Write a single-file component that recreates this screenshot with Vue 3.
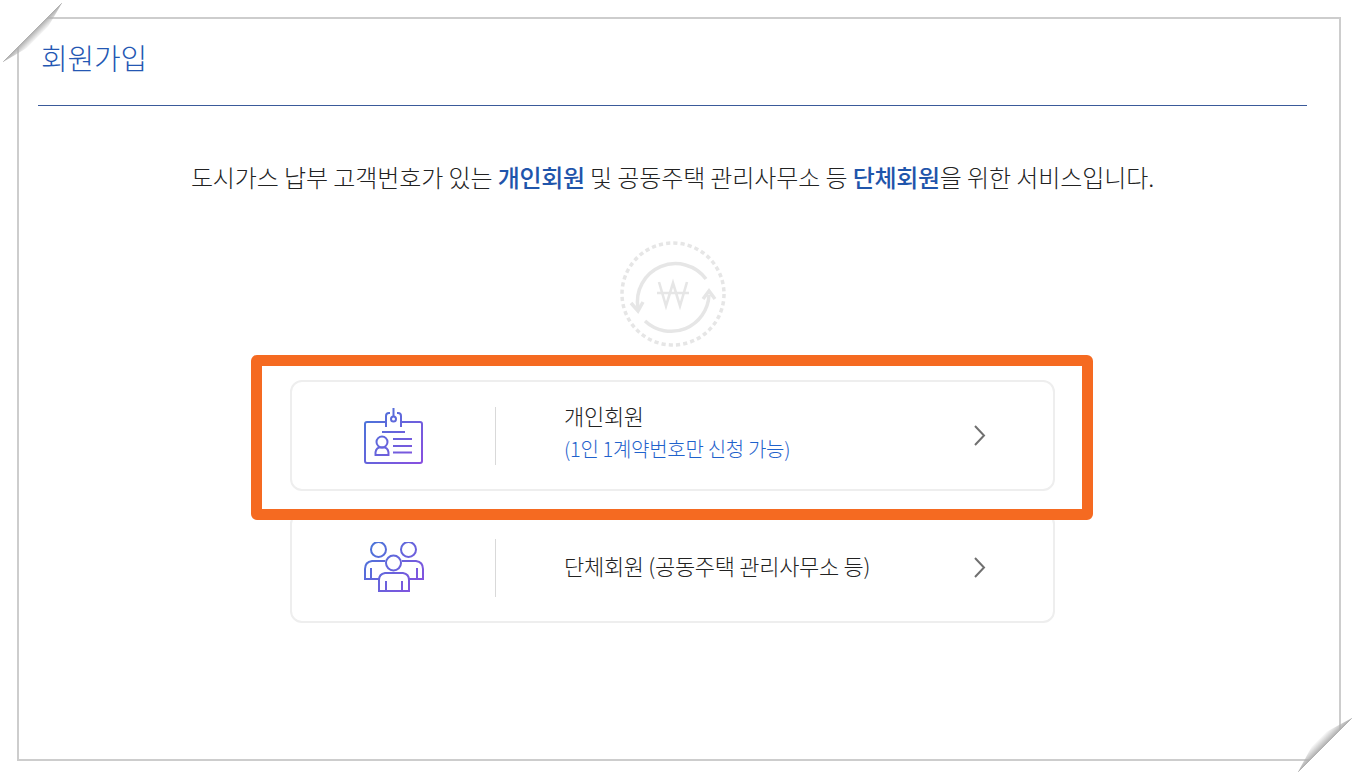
<template>
  <div class="page">
    <div class="frame">
      <span class="fold fold-tl"></span>
      <span class="fold fold-br"></span>

      <h1 class="title">회원가입</h1>

      <p class="intro">
        도시가스 납부 고객번호가 있는 <strong>개인회원</strong> 및 공동주택 관리사무소 등 <strong>단체회원</strong>을 위한 서비스입니다.
      </p>

      <div class="logo">
        <svg width="106" height="106" viewBox="0 0 106 106" fill="none" stroke="#e6e6e6">
          <circle cx="53" cy="53" r="51" stroke-width="3.5" stroke-dasharray="4.200 3.080" />
          <path d="M18 67 A38 38 0 0 1 86 38" stroke-width="3.500" />
          <path d="M11 62 L18 70 L23 61" stroke-width="3.500" />
          <path d="M25 80 A38 38 0 0 0 89 54" stroke-width="3.500" />
          <path d="M83 58 L89 50 L95 58" stroke-width="3.500" />
          <path d="M39 41 L46 65 L53 42 L60 65 L67 41 M37 52 H69" stroke-width="2.600" />
        </svg>
      </div>

      <div class="cards">
        <div class="card">
          <div class="card-icon">
            <svg width="60" height="56" viewBox="0 0 60 56" fill="none" stroke="url(#idGrad)" stroke-width="2">
              <defs>
                <linearGradient id="idGrad" gradientUnits="userSpaceOnUse" x1="0" y1="0" x2="60" y2="56">
                  <stop offset="0" stop-color="#4478d8" />
                  <stop offset="1" stop-color="#8a4ee0" />
                </linearGradient>
              </defs>
              <path d="M22 14 H3 Q1 14 1 16 V53 Q1 55 3 55 H56 Q58 55 58 53 V16 Q58 14 56 14 H37" />
              <path d="M22 19 V8 Q22 5 25 5 H26 M33 5 H34 Q37 5 37 8 V19" />
              <circle cx="29.500" cy="11" r="2.500" />
              <path d="M29.500 0 V8" />
              <path d="M18 24 H41" />
              <circle cx="18" cy="34" r="5.500" />
              <path d="M11.500 47 Q11 41 15 39.500 H21 Q25 41 24.500 47 Z" />
              <path d="M29 31 H48 M29 38 H48 M29 44.500 H48" />
            </svg>
          </div>
          <span class="divider"></span>
          <div class="card-text">
            <div class="card-name">개인회원</div>
            <div class="card-sub">(1인 1계약번호만 신청 가능)</div>
          </div>
          <svg class="arrow" width="14" height="22" viewBox="0 0 14 22" fill="none" stroke="#707070" stroke-width="2">
            <path d="M2 1 L11 10.500 L2 20" />
          </svg>
        </div>

        <div class="card">
          <div class="card-icon">
            <svg width="60" height="52" viewBox="0 1 60 52" fill="none" stroke="url(#grpGrad)" stroke-width="2">
              <defs>
                <linearGradient id="grpGrad" gradientUnits="userSpaceOnUse" x1="0" y1="0" x2="60" y2="52">
                  <stop offset="0" stop-color="#4478d8" />
                  <stop offset="1" stop-color="#8a4ee0" />
                </linearGradient>
              </defs>
              <circle cx="14.500" cy="8.500" r="7.500" />
              <circle cx="44.500" cy="8.500" r="7.500" />
              <circle cx="29.500" cy="22" r="7.500" />
              <path d="M21 20 H8 Q1 21 1 28 V38 H15" />
              <path d="M38 20 H52 Q59 21 59 28 V38 H45" />
              <path d="M7 27 V38 M53 27 V38" />
              <path d="M15 50 V39 Q15 33 21 32 H39 Q45 33 45 39 V50 Z" />
              <path d="M22 40 V50 M38 40 V50" />
            </svg>
          </div>
          <span class="divider"></span>
          <div class="card-text single">
            <div class="card-name">단체회원 (공동주택 관리사무소 등)</div>
          </div>
          <svg class="arrow" width="14" height="22" viewBox="0 0 14 22" fill="none" stroke="#707070" stroke-width="2">
            <path d="M2 1 L11 10.500 L2 20" />
          </svg>
        </div>

        <div class="highlight"></div>
      </div>
    </div>
  </div>
</template>

<script setup>
</script>

<style>
html, body {
  margin: 0;
  background: #fff;
}
</style>

<style scoped>
.page {
  width: 1358px;
  height: 778px;
  padding: 17px 17px 0;
  box-sizing: border-box;
  overflow: hidden;
  font-family: "Noto Sans CJK KR", "Noto Sans", sans-serif;
}

.frame {
  position: relative;
  width: 1324px;
  height: 744px;
  box-sizing: border-box;
  border: 2px solid #cdcdcd;
  padding: 0 32px 0 19px;
  background: #fff;
}

.fold {
  position: absolute;
  width: 70px;
  height: 70px;
}

.fold-tl {
  left: -19px;
  top: -19px;
  background: linear-gradient(135deg, #fff 46.4%, #b0b0b0 46.4%, rgba(255, 255, 255, 0) 54%);
  clip-path: polygon(0 0, 62px 0, 62px 3px, 48px 27px, 27px 48px, 3px 62px, 0 62px);
}

.fold-br {
  right: -19px;
  bottom: -19px;
  background: linear-gradient(135deg, rgba(255, 255, 255, 0) 44%, #b0b0b0 52.9%, #fff 52.9%);
  clip-path: polygon(70px 10px, 70px 70px, 10px 70px, 10px 64px, 24px 38px, 38px 24px, 64px 10px);
}

.title {
  margin: 0;
  height: 87px;
  padding: 18px 0 0 3px;
  box-sizing: border-box;
  border-bottom: 1px solid #3a5a9a;
  color: #2457b3;
  font-size: 29px;
  line-height: 40px;
  font-weight: 300;
  letter-spacing: -0.2px;
}

.intro {
  margin: 51px 0 0;
  text-align: center;
  color: #222;
  font-size: 24px;
  line-height: 40px;
  font-weight: 300;
  letter-spacing: -0.08px;
  white-space: nowrap;
}

.intro strong {
  color: #1f55ab;
  font-weight: 500;
  letter-spacing: -0.35px;
}

.logo {
  display: flex;
  justify-content: center;
  margin-top: 44px;
  height: 106px;
}

.cards {
  position: relative;
  width: 765px;
  margin: 33px auto 0;
  display: flex;
  flex-direction: column;
  gap: 21px;
}

.card {
  display: flex;
  align-items: center;
  height: 111px;
  box-sizing: border-box;
  border: 2px solid #eeeeee;
  border-radius: 12px;
  background: #fff;
}

.card-icon {
  width: 203px;
  display: flex;
  justify-content: center;
}

.divider {
  width: 1px;
  height: 58px;
  background: #d9d9d9;
}

.card-text {
  flex: 1;
  padding: 0 0 10px 68px;
}

.card-text.single {
  padding-bottom: 6px;
}

.card-name {
  color: #222;
  font-size: 22px;
  line-height: 34px;
  font-weight: 300;
  letter-spacing: -0.3px;
}

.card-sub {
  color: #1f62cc;
  font-size: 20px;
  line-height: 30px;
  font-weight: 300;
  letter-spacing: -0.3px;
  margin-top: 2px;
}

.arrow {
  margin-right: 66px;
}

.highlight {
  position: absolute;
  left: -39px;
  right: -38px;
  top: -25px;
  height: 165px;
  box-sizing: border-box;
  border: 11px solid #f56a21;
  border-radius: 6px;
  pointer-events: none;
}
</style>
